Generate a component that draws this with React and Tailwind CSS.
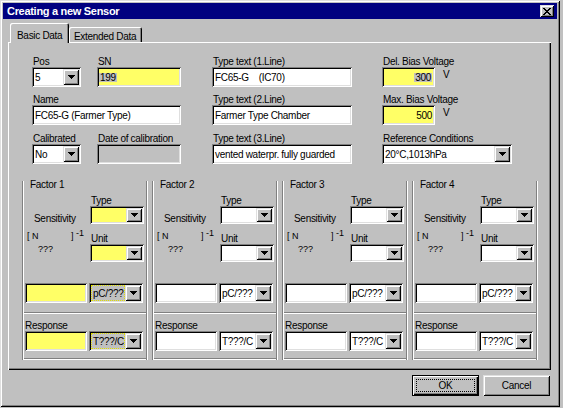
import React from 'react';

// win95 bevels
const WINDOW = 'shadow-[inset_1px_1px_0_#dfdfdf,inset_-1px_-1px_0_#000,inset_2px_2px_0_#fff,inset_-2px_-2px_0_#808080]';
const SUNKEN = 'shadow-[inset_1px_1px_0_#808080,inset_-1px_-1px_0_#fff,inset_2px_2px_0_#000,inset_-2px_-2px_0_#dfdfdf]';
const RAISED = 'shadow-[inset_1px_1px_0_#dfdfdf,inset_-1px_-1px_0_#000,inset_2px_2px_0_#fff,inset_-2px_-2px_0_#808080]';
const PANEL = 'shadow-[inset_1px_1px_0_#fff,inset_-1px_-1px_0_#000,inset_-2px_-2px_0_#808080]';
const TAB = 'shadow-[inset_1px_1px_0_#fff,inset_-1px_0_0_#000,inset_-2px_0_0_#808080]';
const ETCHED = 'shadow-[inset_1px_0_0_#808080,inset_2px_0_0_#fff,inset_-1px_0_0_#fff,inset_-2px_0_0_#808080,inset_0_-1px_0_#fff,inset_0_-2px_0_#808080]';

// yellow "required" fill (dithered yellow/white in the original)
const fillClass = (fill) =>
  fill === 'yellow' ? 'bg-[#ffff66]' : fill === 'gray' ? 'bg-[#c0c0c0]' : 'bg-white';

const Arrow = () => (
  <svg width="7" height="4" viewBox="0 0 7 4" shapeRendering="crispEdges">
    <path d="M0 0h7v1H0zM1 1h5v1H1zM2 2h3v1H2zM3 3h1v1H3z" fill="#000" />
  </svg>
);

const CloseGlyph = () => (
  <svg width="8" height="7" viewBox="0 0 8 7" shapeRendering="crispEdges">
    <path
      d="M0 0h2v1H0zM6 0h2v1H6zM1 1h2v1H1zM5 1h2v1H5zM2 2h4v1H2zM3 3h2v1H3zM2 4h4v1H2zM1 5h2v1H1zM5 5h2v1H5zM0 6h2v1H0zM6 6h2v1H6z"
      fill="#000"
    />
  </svg>
);

const Label = ({ children, className = '' }) => (
  <div className={`h-[11px] leading-[11px] pl-[1px] whitespace-nowrap ${className}`}>{children}</div>
);

const Field = ({ w, h = 'h-[20px]', fill = 'white', right, className = '', children }) => (
  <div
    className={`${w} ${h} ${SUNKEN} ${fillClass(fill)} flex items-center whitespace-pre overflow-hidden ${
      right ? 'justify-end pr-[3px]' : 'pl-[3px]'
    } ${className}`}
  >
    {children}
  </div>
);

const Sel = ({ children }) => (
  <span className="bg-[#c0c0c0] h-[9px] leading-[9px] px-[1px] inline-block">{children}</span>
);

const Combo = ({ w, h = 'h-[20px]', value, fill = 'white', dotted, className = '' }) => (
  <div className={`${w} ${h} p-[2px] ${SUNKEN} bg-white flex ${className}`}>
    <div
      className={`flex-1 flex items-center pl-[1px] whitespace-pre overflow-hidden ${fillClass(fill)} ${
        dotted ? 'border border-dotted border-[#e0e000]' : ''
      }`}
    >
      {value}
    </div>
    <div className={`w-[16px] h-full bg-[#c0c0c0] ${RAISED} flex items-center justify-center`}>
      <Arrow />
    </div>
  </div>
);

const FactorGroup = ({ n, yellow }) => {
  const f = yellow ? 'yellow' : 'white';
  return (
    <div className="flex flex-col w-[126px]">
      <div className={`h-[133px] ${ETCHED} flex flex-col`}>
        <div className="-mt-[2px] ml-[8px] h-[11px] leading-[11px]">Factor {n}</div>
        <div className="flex">
          <div className="w-[68px] flex flex-col">
            <div className="ml-[12px] mt-[23px] h-[11px] leading-[11px]">Sensitivity</div>
            <div className="flex items-start mt-[8px] text-[9px] leading-[9px] tracking-normal h-[22px]">
              <span className="ml-[5px] w-[5px]">[</span>
              <span className="w-[6px]">N</span>
              <span className="w-[33px] mt-[13px]">???</span>
              <span className="w-[5px]">]</span>
              <span className="-mt-[3px]">-1</span>
            </div>
          </div>
          <div className="flex flex-col mt-[5px]">
            <Label className="pl-0">Type</Label>
            <Combo w="w-[54px]" h="h-[18px]" fill={f} />
            <Label className="mt-[9px] pl-0">Unit</Label>
            <Combo w="w-[54px]" h="h-[18px]" fill={f} />
          </div>
        </div>
        <div className="flex mt-[21px] ml-[3px]">
          <Field w="w-[62px]" fill={f} />
          <Combo
            className="ml-[2px]"
            w="w-[54px]"
            value="pC/???"
            fill={yellow ? 'gray' : 'white'}
            dotted={yellow}
          />
        </div>
      </div>
      <div className={`h-[46px] ${ETCHED} flex flex-col pt-[7px] pl-[3px]`}>
        <div className="h-[10px] leading-[10px]">Response</div>
        <div className="flex">
          <Field w="w-[62px]" fill={f} />
          <Combo
            className="ml-[2px]"
            w="w-[54px]"
            value="T???/C"
            fill={yellow ? 'gray' : 'white'}
            dotted={yellow}
          />
        </div>
      </div>
    </div>
  );
};

export default function App() {
  return (
    <div className="w-[563px] h-[408px] bg-[#c0c0c0] text-black text-[10px] leading-[11px] tracking-[-0.3px] font-['Liberation_Sans',Arial,sans-serif]">
      <div className={`w-[560px] h-[407px] p-[3px] flex flex-col bg-[#c0c0c0] ${WINDOW}`}>
        {/* title bar */}
        <div className="h-[16px] bg-[#000080] flex items-center justify-between">
          <span className="ml-[4px] text-white font-bold text-[11px] tracking-[-0.3px]">
            Creating a new Sensor
          </span>
          <div className={`w-[14px] h-[12px] mr-[3px] bg-[#c0c0c0] ${RAISED} flex items-center justify-center`}>
            <CloseGlyph />
          </div>
        </div>

        {/* tabs */}
        <div className="mt-[4px] h-[19px] flex items-end pl-[7px] whitespace-nowrap">
          <div className={`relative z-10 h-[20px] -mb-px w-[59px] bg-[#c0c0c0] rounded-t-[2px] ${TAB} pl-[7px] pt-[7px]`}>
            Basic Data
          </div>
          <div className={`h-[15px] w-[73px] rounded-t-[2px] ${TAB} pl-[5px] pt-[4px]`}>Extended Data</div>
        </div>

        {/* tab page */}
        <div className={`ml-[5px] w-[543px] h-[328px] ${PANEL} flex flex-col`}>
          <div className="flex pt-[14px] pl-[24px]">
            <div className="flex flex-col w-[149px]">
              <div className="flex">
                <div className="flex flex-col">
                  <Label>Pos</Label>
                  <Combo w="w-[49px]" value="5" />
                </div>
                <div className="flex flex-col ml-[16px]">
                  <Label>SN</Label>
                  <Field w="w-[84px]" fill="yellow" className="!pl-[2px]">
                    <Sel>199</Sel>
                  </Field>
                </div>
              </div>
              <div className="flex flex-col mt-[7px]">
                <Label>Name</Label>
                <Field w="w-[149px]">FC65-G (Farmer Type)</Field>
              </div>
              <div className="flex mt-[8px]">
                <div className="flex flex-col">
                  <Label>Calibrated</Label>
                  <Combo w="w-[49px]" value="No" />
                </div>
                <div className="flex flex-col ml-[16px]">
                  <Label>Date of calibration</Label>
                  <Field w="w-[84px]" fill="gray" />
                </div>
              </div>
            </div>

            <div className="flex flex-col w-[140px] ml-[31px]">
              <Label>Type text (1.Line)</Label>
              <Field w="w-[140px]">FC65-G    (IC70)</Field>
              <Label className="mt-[7px]">Type text (2.Line)</Label>
              <Field w="w-[140px]">Farmer Type Chamber</Field>
              <Label className="mt-[8px]">Type text (3.Line)</Label>
              <Field w="w-[140px]">vented waterpr. fully guarded</Field>
            </div>

            <div className="flex flex-col ml-[30px]">
              <Label>Del. Bias Voltage</Label>
              <div className="flex items-start">
                <Field w="w-[53px]" fill="yellow" right>
                  <Sel>300</Sel>
                </Field>
                <span className="ml-[8px] mt-[2px]">V</span>
              </div>
              <Label className="mt-[7px]">Max. Bias Voltage</Label>
              <div className="flex items-start">
                <Field w="w-[53px]" fill="yellow" right>
                  500
                </Field>
                <span className="ml-[8px] mt-[2px]">V</span>
              </div>
              <Label className="mt-[8px]">Reference Conditions</Label>
              <Combo w="w-[130px]" value="20°C,1013hPa" />
            </div>
          </div>

          <div className="flex mt-[17px] pl-[14px] gap-[4px]">
            <FactorGroup n={1} yellow />
            <FactorGroup n={2} />
            <FactorGroup n={3} />
            <FactorGroup n={4} />
          </div>
        </div>

        {/* buttons */}
        <div className="flex justify-end mt-[5px] mr-[7px] gap-[4px]">
          <div className={`w-[67px] h-[21px] border border-black bg-[#c0c0c0] flex ${PANEL}`}>
            <div className="flex-1 m-[3px] border border-dotted border-black flex items-center justify-center">
              OK
            </div>
          </div>
          <div className={`w-[67px] h-[21px] bg-[#c0c0c0] ${RAISED} flex items-center justify-center`}>
            Cancel
          </div>
        </div>
      </div>
    </div>
  );
}
